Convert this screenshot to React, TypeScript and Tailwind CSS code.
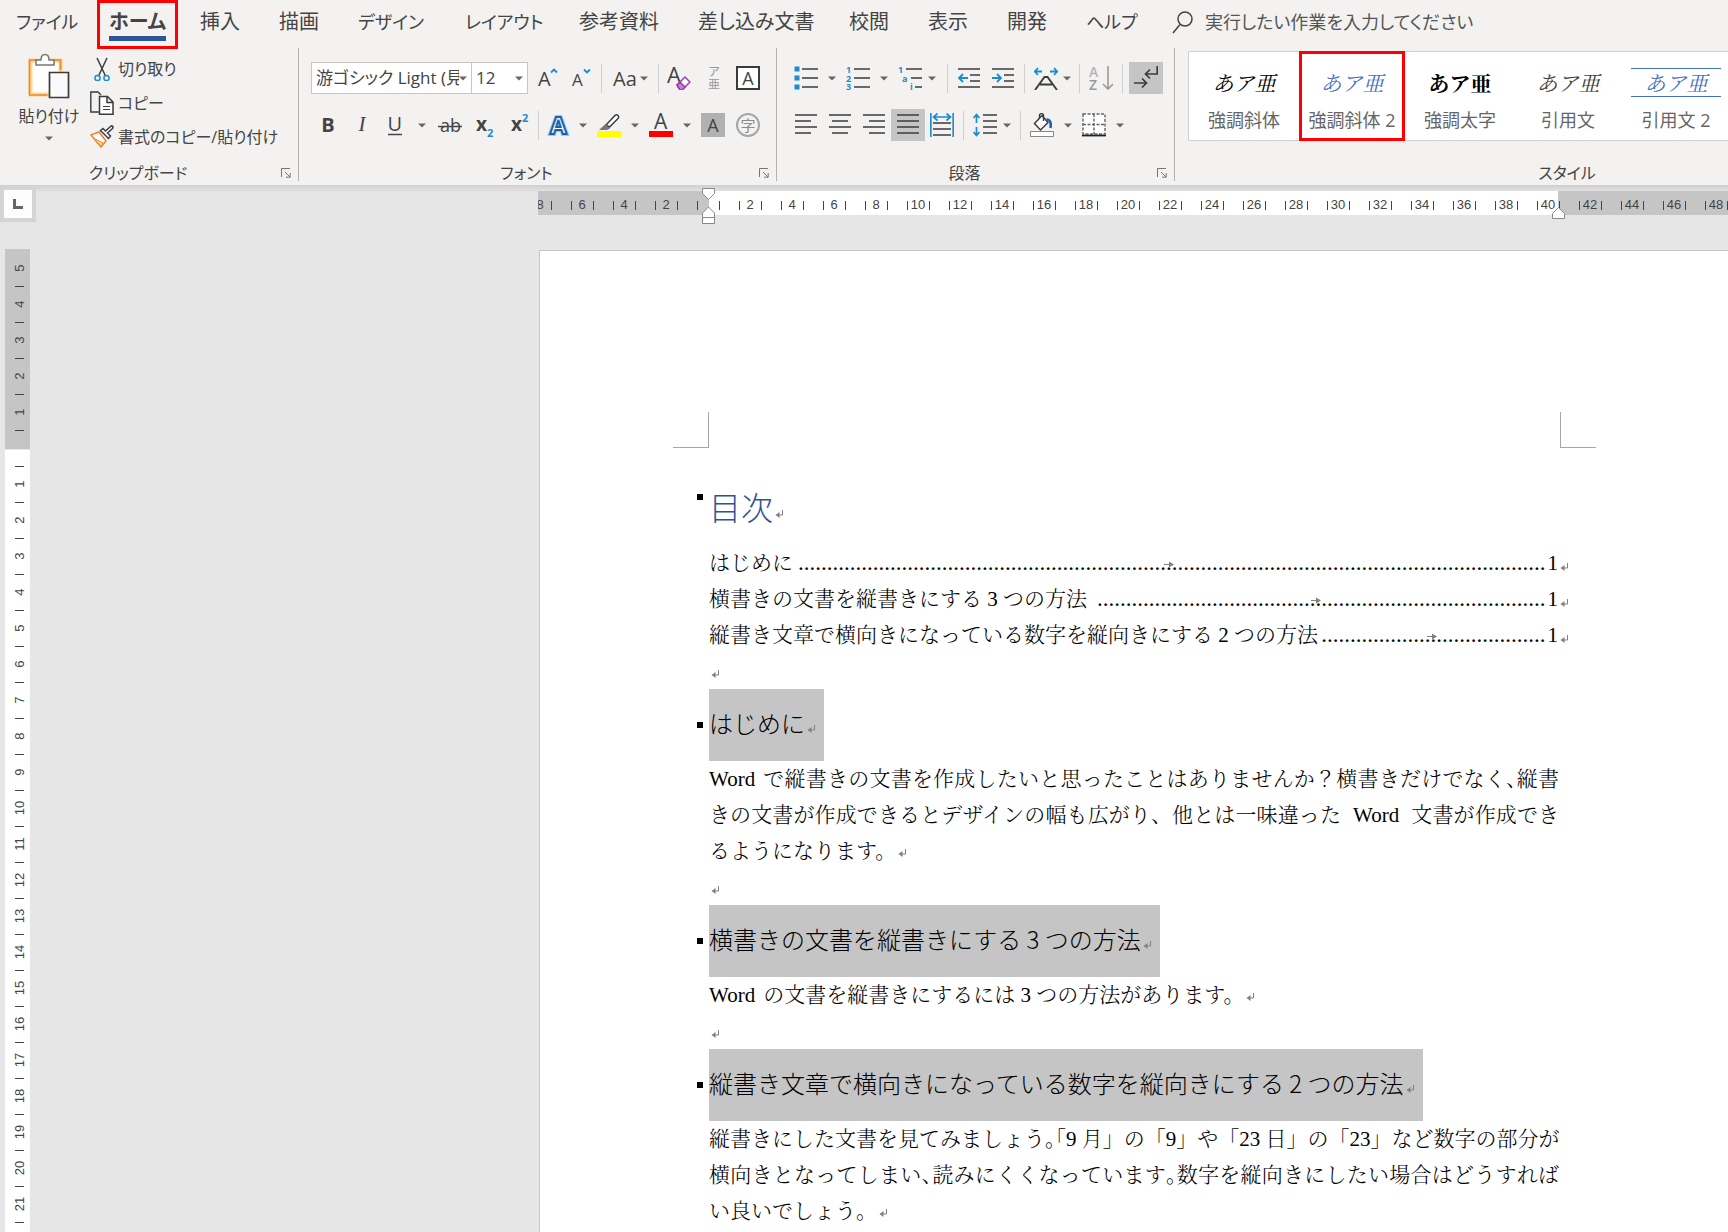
import React from 'react';
import { clsx } from 'clsx';

const INK = '#444444';
const BLUE = '#1e8bcd';

type IconProps = { w?: number; h?: number; children: React.ReactNode };

const Icon = ({ w = 24, h = 24, children }: IconProps) => (
  <svg width={w} height={h} viewBox={`0 0 ${w} ${h}`} fill="none" className="shrink-0" aria-hidden="true">
    {children}
  </svg>
);

const Caret = () => (
  <svg width="8" height="5" viewBox="0 0 8 5" className="shrink-0" aria-hidden="true">
    <path d="M0 0.5h8L4 4.5z" fill="#666" />
  </svg>
);

const Tool = ({ label, width = 'w-[34px]', active, children }: { label: string; width?: string; active?: boolean; children: React.ReactNode }) => (
  <button
    type="button"
    aria-label={label}
    className={clsx('flex h-8 shrink-0 items-center justify-center', width, active && 'bg-[#c5c5c5]')}
  >
    {children}
  </button>
);

const Drop = ({ label, width = 'w-[18px]' }: { label: string; width?: string }) => (
  <Tool label={label} width={width}><Caret /></Tool>
);

const Sep = ({ className = 'mx-1' }: { className?: string }) => (
  <span className={clsx('h-[29px] w-px shrink-0 bg-[#cfcfcf]', className)} />
);

const Lines = ({ rows, color = '#3b3b3b' }: { rows: number[][]; color?: string }) => (
  <path d={rows.map(([x, y, len]) => `M${x} ${y}h${len}`).join('')} stroke={color} strokeWidth="1.6" />
);

const Group = ({ title, width, launcher = true, children }: { title: string; width: string; launcher?: boolean; children: React.ReactNode }) => (
  <section className={clsx('flex shrink-0 flex-col justify-between', width, launcher && 'border-r border-[#b3b0ad]')}>
    {children}
    <div className="flex h-4 items-center">
      <h2 className="flex-1 text-center text-[16px] leading-4">{title}</h2>
      {launcher && (
        <button type="button" aria-label={`${title}の設定`} className="mr-0.5 flex w-5 justify-center">
          <Icon w={10} h={10}>
            <path d="M0.5 9V0.5H9M4 4l5 5M9.2 5v4.2H5" stroke="#777" />
          </Icon>
        </button>
      )}
    </div>
  </section>
);

const tabs = [
  { label: 'ファイル', width: 'w-[93px]', kana: true },
  { label: 'ホーム', width: 'w-[91px]', current: true },
  { label: '挿入', width: 'w-[79px]' },
  { label: '描画', width: 'w-[79px]' },
  { label: 'デザイン', width: 'w-[107px]', kana: true },
  { label: 'レイアウト', width: 'w-[114px]', kana: true },
  { label: '参考資料', width: 'w-[119px]' },
  { label: '差し込み文書', width: 'w-[151px]' },
  { label: '校閲', width: 'w-[79px]' },
  { label: '表示', width: 'w-[79px]' },
  { label: '開発', width: 'w-[79px]' },
  { label: 'ヘルプ', width: 'w-[86px]', kana: true },
];

const TabBar = () => (
  <nav className="flex h-12 items-start pl-4 leading-[44px]">
    {tabs.map((t) => (
      <div key={t.label} className={clsx('shrink-0', t.width, t.kana ? 'text-[18px]' : 'text-[20px]')}>
        <button type="button" className="relative whitespace-nowrap">
          <span className={clsx(t.current && 'font-bold')}>{t.label}</span>
          {t.current && (
            <>
              <span className="absolute inset-x-0 top-9 h-[5px] bg-[#2b579a]" />
              <span className="absolute -inset-x-3 top-0 h-[49px] border-3 border-[#ff0000]" />
            </>
          )}
        </button>
      </div>
    ))}
    <label className="flex flex-1 items-center gap-3 text-[18px]">
      <Icon w={21} h={44}>
        <circle cx="13" cy="19" r="7" stroke={INK} strokeWidth="1.5" />
        <path d="M8 24.5L1 33" stroke={INK} strokeWidth="1.5" />
      </Icon>
      <input
        className="h-11 flex-1 bg-transparent outline-none placeholder:text-[#555]"
        aria-label="操作アシスト"
        placeholder="実行したい作業を入力してください"
      />
    </label>
  </nav>
);

const Clipboard = () => (
  <Group title="クリップボード" width="w-[299px]">
    <div className="flex pt-1">
      <button type="button" className="flex w-[90px] flex-col items-center pl-2 text-[16px]">
        <Icon w={42} h={48}>
          <path d="M2.5 8.500h30v34h-30z" fill="#fff" stroke="#fbd98f" strokeWidth="4" />
          <path d="M10 8H1.500v35h18M26 8h6.500v10" stroke="#ee8434" strokeWidth="1.600" />
          <path d="M8 13V8h5c0-3 1-5.500 4-5.500s4 2.500 4 5.500h5v5z" fill="#fff" stroke="#777" strokeWidth="1.500" />
          <path d="M21.500 20.500h19v25h-19z" fill="#fafafa" stroke="#3b3b3b" strokeWidth="1.700" />
        </Icon>
        <span className="mt-1 leading-6">貼り付け</span>
        <span className="mt-1 flex h-3 items-center"><Caret /></span>
      </button>
      <div className="flex flex-col text-[16px] leading-[34px]">
        <button type="button" className="flex items-center gap-1 whitespace-nowrap">
          <Icon>
            <path d="M7 1l8.500 18M17 1L8.500 19" stroke="#3b3b3b" strokeWidth="1.500" />
            <circle cx="7.500" cy="21" r="2.600" stroke={BLUE} strokeWidth="1.500" />
            <circle cx="16.500" cy="21" r="2.600" stroke={BLUE} strokeWidth="1.500" />
          </Icon>
          切り取り
        </button>
        <button type="button" className="flex items-center gap-1 whitespace-nowrap">
          <Icon>
            <path d="M9 21H0.800V1H8l3 3" stroke="#3b3b3b" strokeWidth="1.400" />
            <path d="M9.500 5.500h8l5.500 5.500v12.300H9.500zM17 6v5.500h6" fill="#fff" stroke="#3b3b3b" strokeWidth="1.500" />
            <path d="M13 15.500h7M13 18.500h7" stroke="#3b3b3b" strokeWidth="1.200" />
          </Icon>
          コピー
        </button>
        <button type="button" className="flex items-center gap-1 whitespace-nowrap">
          <Icon>
            <path d="M9 7L1 10l10 12 5-6z" fill="#fff" stroke="#ee8434" strokeWidth="1.500" />
            <path d="M3.500 13l9.500 5-2 3.500z" fill="#fbd98f" stroke="#ee8434" />
            <path d="M10.500 5.500l8 8 2-2.500-3-3 5-4.500c1.500-1.500-0.500-3.500-2-2l-5 4.500-2.500-2.500z" fill="#fff" stroke="#3b3b3b" strokeWidth="1.500" />
          </Icon>
          書式のコピー/貼り付け
        </button>
      </div>
    </div>
  </Group>
);

const Combo = ({ label, value, width }: { label: string; value: string; width: string }) => (
  <span className={clsx('flex h-8 items-center border border-[#c6c6c6] bg-white pr-1 pl-1', width)}>
    <select aria-label={label} className="min-w-0 flex-1 appearance-none overflow-hidden bg-white text-[17px] leading-7 outline-none">
      <option>{value}</option>
    </select>
    <Caret />
  </span>
);

const FontGroup = () => (
  <Group title="フォント" width="w-[478px]">
    <div className="flex flex-col gap-[15px] pt-3.5 pl-3">
      <div className="flex items-center">
        <Combo label="フォント名" value="游ゴシック Light (見出しのフォント)" width="w-[161px]" />
        <Combo label="フォント サイズ" value="12" width="w-[57px] -ml-px mr-[3px]" />
        <Tool label="フォントの拡大">
          <Icon>
            <text x="2" y="20" fontSize="20" fill={INK}>A</text>
            <path d="M15 6.500l3-3 3 3" stroke={BLUE} strokeWidth="1.800" />
          </Icon>
        </Tool>
        <Tool label="フォントの縮小">
          <Icon>
            <text x="2" y="20" fontSize="17" fill={INK}>A</text>
            <path d="M14 3.500l3 3 3-3" stroke={BLUE} strokeWidth="1.800" />
          </Icon>
        </Tool>
        <Sep className="mx-0.5" />
        <Tool label="文字種の変換" width="w-[52px]">
          <Icon w={28}><text x="1" y="20" fontSize="20" fill={INK}>Aa</text></Icon>
          <Caret />
        </Tool>
        <Sep className="mx-0.5" />
        <Tool label="書式のクリア" width="w-9">
          <Icon>
            <text x="0" y="17" fontSize="22" fill={INK}>A</text>
            <path d="M10 19l8-8 5 5-8 8h-2z" fill="#fff" stroke="#9b3fa8" strokeWidth="1.500" />
            <path d="M10 19l3-3 5 5-3 3h-2z" fill="#c77fd0" stroke="#9b3fa8" strokeWidth="1.500" />
          </Icon>
        </Tool>
        <Tool label="ルビ">
          <span className="flex flex-col items-center text-[12px] leading-[13px] text-[#999]"><span>ア</span><span>亜</span></span>
        </Tool>
        <Tool label="囲み線">
          <span className="flex size-6 items-center justify-center border-2 border-[#3b3b3b] bg-white text-[18px] leading-5">A</span>
        </Tool>
      </div>
      <div className="flex items-center">
        <Tool label="太字"><span className="text-[20px] font-bold">B</span></Tool>
        <Tool label="斜体"><span className="font-['Liberation_Serif',serif] text-[21px] italic">I</span></Tool>
        <Tool label="下線" width="w-8">
          <Icon><text x="4.500" y="18" fontSize="20" fill={INK}>U</text><path d="M5 21.500h14" stroke={INK} strokeWidth="1.500" /></Icon>
        </Tool>
        <Drop label="下線の種類" width="w-[21px]" />
        <Tool label="取り消し線" width="w-9">
          <Icon><text x="2" y="19" fontSize="18" fill={INK}>ab</text><path d="M0 13.500h24" stroke={INK} strokeWidth="1.500" /></Icon>
        </Tool>
        <Tool label="下付き" width="w-9">
          <Icon><text x="2" y="18" fontSize="19" fontWeight="700" fill={INK}>x</text><text x="13" y="24" fontSize="11" fontWeight="700" fill={BLUE}>2</text></Icon>
        </Tool>
        <Tool label="上付き">
          <Icon><text x="2" y="18" fontSize="19" fontWeight="700" fill={INK}>x</text><text x="13" y="9" fontSize="11" fontWeight="700" fill={BLUE}>2</text></Icon>
        </Tool>
        <Sep className="mr-0.5" />
        <Tool label="文字の効果">
          <Icon>
            <text x="4" y="21" fontSize="24" fontWeight="700" fill="#9cc9ee" stroke="#9cc9ee" strokeWidth="4">A</text>
            <text x="4" y="21" fontSize="24" fontWeight="700" fill="#fff" stroke="#1763ae" strokeWidth="2">A</text>
          </Icon>
        </Tool>
        <Drop label="文字の効果の種類" width="w-4" />
        <Tool label="蛍光ペンの色" width="w-9">
          <Icon>
            <path d="M9 12L18 2.500c2-2 5 1 3 3L12.500 14z" fill="#fff" stroke="#3b3b3b" strokeWidth="1.500" />
            <path d="M8.500 11l4.500 4.500-3 1.500H2z" fill="#777" />
            <path d="M0 18h24v6H0z" fill="#ffff00" />
          </Icon>
        </Tool>
        <Drop label="蛍光ペンの色の選択" width="w-4" />
        <Tool label="フォントの色" width="w-9">
          <Icon><text x="5" y="16" fontSize="21" fill={INK}>A</text><path d="M0 18h24v6H0z" fill="#ff0000" /></Icon>
        </Tool>
        <Drop label="フォントの色の選択" width="w-4" />
        <Tool label="文字の網かけ" width="w-9">
          <span className="flex size-6 items-center justify-center bg-[#b1b1b1] text-[18px]">A</span>
        </Tool>
        <Tool label="囲い文字">
          <span className="flex size-6 items-center justify-center rounded-full border-2 border-[#a6a6a6] text-[15px] text-[#8a8a8a]">字</span>
        </Tool>
      </div>
    </div>
  </Group>
);

const ParagraphGroup = () => (
  <Group title="段落" width="w-[398px]">
    <div className="flex flex-col gap-[15px] pt-3.5 pl-3">
      <div className="flex items-center">
        <Tool label="箇条書き">
          <Icon>
            <path d="M0.500 0.500h5v5h-5zM0.500 9.500h5v5h-5zM0.500 18.500h5v5h-5z" fill={BLUE} />
            <Lines rows={[[8, 3, 16], [8, 12, 16], [8, 21, 16]]} />
          </Icon>
        </Tool>
        <Drop label="行頭文字" />
        <Tool label="段落番号">
          <Icon>
            <g fontSize="9" fontWeight="700" fill={BLUE}><text x="0" y="6.500">1</text><text x="0" y="15.500">2</text><text x="0" y="24">3</text></g>
            <Lines rows={[[8, 3, 16], [8, 12, 16], [8, 21, 16]]} />
          </Icon>
        </Tool>
        <Drop label="番号ライブラリ" />
        <Tool label="アウトライン">
          <Icon>
            <g fontSize="9" fontWeight="700" fill={BLUE}><text x="0" y="6.500">1</text><text x="4" y="15.500">a</text><text x="12" y="24">i</text></g>
            <Lines rows={[[8, 3, 16], [13, 12, 11], [17, 21, 7]]} />
          </Icon>
        </Tool>
        <Drop label="リスト ライブラリ" width="w-2.5" />
        <Sep className="mr-1 ml-2.5" />
        <Tool label="インデントを減らす">
          <Icon>
            <Lines rows={[[1, 3, 22], [13, 9, 10], [13, 15, 10], [1, 21, 22]]} />
            <path d="M11 12H2M6 8l-4 4 4 4" stroke={BLUE} strokeWidth="1.800" />
          </Icon>
        </Tool>
        <Tool label="インデントを増やす">
          <Icon>
            <Lines rows={[[1, 3, 22], [13, 9, 10], [13, 15, 10], [1, 21, 22]]} />
            <path d="M1 12h9M6 8l4 4-4 4" stroke={BLUE} strokeWidth="1.800" />
          </Icon>
        </Tool>
        <Sep />
        <Tool label="拡張書式">
          <Icon>
            <path d="M1 24L10.500 11h3L23 24M6 18.500h12" stroke="#3b3b3b" strokeWidth="1.900" />
            <path d="M8 5.500H1M4 2L0.800 5.500 4 9M16 5.500h7M20 2l3.200 3.500L20 9" stroke={BLUE} strokeWidth="1.800" />
          </Icon>
        </Tool>
        <Drop label="拡張書式の種類" width="w-2" />
        <Sep className="mr-1 ml-2" />
        <Tool label="並べ替え">
          <Icon>
            <g fontSize="14" fontWeight="600"><text x="0" y="11" fill="#b5b5b5">A</text><text x="0" y="24" fill="#999">Z</text></g>
            <path d="M19 0v23M14 18l5 5 5-5" stroke="#999" strokeWidth="1.600" />
          </Icon>
        </Tool>
        <Sep className="mr-1.5 ml-1" />
        <Tool label="編集記号の表示/非表示" active>
          <Icon>
            <path d="M23.200 0v8H12M16 3.500L11.500 8 16 12.500M0 17h12M8 12.500l4.500 4.500L8 21.500" stroke="#3b3b3b" strokeWidth="1.700" />
          </Icon>
        </Tool>
      </div>
      <div className="flex items-center">
        <Tool label="左揃え"><Icon><Lines rows={[[1, 2, 22], [1, 8, 16], [1, 14, 22], [1, 20, 16]]} /></Icon></Tool>
        <Tool label="中央揃え"><Icon><Lines rows={[[1, 2, 22], [4, 8, 16], [1, 14, 22], [4, 20, 16]]} /></Icon></Tool>
        <Tool label="右揃え"><Icon><Lines rows={[[1, 2, 22], [7, 8, 16], [1, 14, 22], [7, 20, 16]]} /></Icon></Tool>
        <Tool label="両端揃え" active><Icon><Lines rows={[[1, 2, 22], [1, 8, 22], [1, 14, 22], [1, 20, 22]]} /></Icon></Tool>
        <Tool label="均等割り付け">
          <Icon>
            <path d="M0.800 0v24M23.200 0v24M4 4h16M7.500 0.500L3.500 4l4 3.500M16.500 0.500l4 3.500-4 3.500" stroke={BLUE} strokeWidth="1.700" />
            <Lines rows={[[3, 10, 18], [3, 16, 18], [3, 22, 18]]} />
          </Icon>
        </Tool>
        <Sep />
        <Tool label="行と段落の間隔">
          <Icon>
            <path d="M3.500 2v8M0.500 5l3-3.500 3 3.500M3.500 14v8M0.500 19l3 3.500 3-3.500" stroke={BLUE} strokeWidth="1.700" />
            <Lines rows={[[10, 2, 14], [10, 8, 14], [10, 14, 14], [10, 20, 14]]} />
          </Icon>
        </Tool>
        <Drop label="行間のオプション" width="w-2.5" />
        <Sep className="mr-1 ml-2" />
        <Tool label="塗りつぶし">
          <Icon>
            <path d="M12 2.500L4.500 10.500l6 6.500 7.500-7.500z" fill="#fff" stroke="#3b3b3b" strokeWidth="1.500" />
            <path d="M9.500 5V2.500c0-2.500 4-2.500 4 0V8" stroke="#3b3b3b" strokeWidth="1.400" />
            <path d="M16.500 6.500c3.500-0.500 5 3 4 8.500" stroke="#1763ae" strokeWidth="2.600" />
            <path d="M0.500 18.500h23v5h-23z" fill="#fff" stroke="#888" />
          </Icon>
        </Tool>
        <Drop label="塗りつぶしの色" />
        <Tool label="罫線">
          <Icon>
            <path d="M1 1h22v20H1zM12 1v20M1 11.500h22" fill="#fff" stroke="#666" strokeWidth="1.400" strokeDasharray="3 1.500" />
            <path d="M0 22.500h24" stroke="#222" strokeWidth="1.800" />
          </Icon>
        </Tool>
        <Drop label="罫線の種類" />
      </div>
    </div>
  </Group>
);

const styleItems = [
  { label: '強調斜体', sample: 'italic text-black' },
  { label: '強調斜体 2', sample: 'italic text-[#4472c4]', marked: true },
  { label: '強調太字', sample: 'font-bold text-black' },
  { label: '引用文', sample: 'italic text-[#404040]' },
  { label: '引用文 2', sample: 'italic text-[#4472c4] border-y border-[#4472c4]' },
];

// the gallery runs on past the right edge of the window
const StylesGroup = () => (
  <Group title="スタイル" width="w-[784px]" launcher={false}>
    <div className="mt-[3px] ml-[13px] flex h-[90px] border border-r-0 border-[#d0d0d0] bg-white">
      {styleItems.map((s) => (
        <button
          key={s.label}
          type="button"
          className={clsx(
            '-my-px ml-0.5 flex w-[106px] shrink-0 flex-col items-center border-3 pt-3.5 whitespace-nowrap',
            s.marked ? 'border-[#ff0000]' : 'border-transparent',
          )}
        >
          <span
            className={clsx(
              "flex h-[29px] w-[90px] items-center justify-center font-['Noto_Serif_CJK_JP','Noto_Sans_CJK_JP',serif] text-[21px] [font-feature-settings:normal]",
              s.sample,
            )}
          >
            あア亜
          </span>
          <span className="mt-[11px] text-[18px] leading-6 text-[#666]">{s.label}</span>
        </button>
      ))}
    </div>
  </Group>
);

const hMarks = ['8', '6', '4', '2', '', ...Array.from({ length: 25 }, (_, i) => String((i + 1) * 2))];

const HorizontalRuler = () => (
  <div className="relative mt-1.5 grid h-6 min-w-0 flex-1">
    <div className="col-start-1 row-start-1 flex">
      <span className="w-[171px] bg-[#c5c5c5]" />
      <span className="w-[849px] bg-white" />
      <span className="flex-1 bg-[#c5c5c5]" />
    </div>
    <div className="col-start-1 row-start-1 flex min-w-0 items-center overflow-hidden pt-1 font-['Liberation_Sans',sans-serif] text-[13px] text-[#444]">
      {hMarks.map((m, i) => (
        <span key={i} className={clsx('flex w-[42px] shrink-0 items-center justify-center gap-px', i === 0 && '-ml-[19px]')}>
          <span className="h-[9px] w-px bg-[#444]" />
          <span className="w-[19px] text-center leading-4">{m}</span>
          <span className="h-[9px] w-px bg-[#444]" />
        </span>
      ))}
    </div>
    <svg width="14" height="37" viewBox="0 0 14 37" className="absolute -top-[3px] left-[164px]" aria-hidden="true">
      <path d="M0.500 0.500h12v5l-6 6-6-6zM6.500 19l6 6v10.500H0.500V25zM0.500 29.500h12" fill="#fff" stroke="#888" />
    </svg>
    <svg width="14" height="12" viewBox="0 0 14 12" className="absolute top-4 left-[1014px]" aria-hidden="true">
      <path d="M6.500 0.500l6 6v5H0.500v-5z" fill="#fff" stroke="#888" />
    </svg>
  </div>
);

const VMark = ({ n }: { n: number }) => <span className="flex h-[18px] -rotate-90 items-center justify-center">{n}</span>;
const VTick = () => <span className="flex h-[18px] items-center justify-center"><span className="h-px w-[9px] bg-[#444]" /></span>;

const VerticalRuler = () => (
  <div className="ml-[5px] w-[25px] shrink-0 font-['Liberation_Sans',sans-serif] text-[13px] text-[#444]">
    <div className="bg-[#c5c5c5] py-2.5 pl-1">
      {[5, 4, 3, 2, 1].map((n) => <React.Fragment key={n}><VMark n={n} /><VTick /></React.Fragment>)}
    </div>
    <div className="mt-px bg-white pt-[7px] pl-1">
      {Array.from({ length: 24 }, (_, i) => <React.Fragment key={i}><VTick /><VMark n={i + 1} /></React.Fragment>)}
    </div>
  </div>
);

const Ret = () => (
  <svg width="9" height="9" viewBox="0 0 9 9" fill="none" className="ml-0.5 inline-block shrink-0" aria-hidden="true">
    <path d="M7.500 0v5H2" stroke="#808080" />
    <path d="M4.500 2v6L0.500 5z" fill="#808080" />
  </svg>
);

// half-width setting for punctuation, as Japanese line composition does
const Half = ({ children }: { children: string }) => <span className="[font-feature-settings:'halt']">{children}</span>;

const Full = ({ children }: { children: React.ReactNode }) => (
  <span className="block whitespace-nowrap [text-align-last:justify]">{children}</span>
);

const Blank = () => <p className="flex h-9 items-center pt-1.5"><Ret /></p>;

const TocRow = ({ title, dots }: { title: string; dots: number }) => (
  <li className="-mr-5 flex h-9 items-center">
    <a href="#top" className="flex flex-1 items-center whitespace-nowrap">
      <span>{title}</span>
      <span className="relative flex h-9 flex-1 items-center justify-end text-[23px]">
        {'.'.repeat(dots)}
        <svg width="10" height="7" viewBox="0 0 10 7" className="absolute top-4 left-1/2 -translate-x-1/2" aria-hidden="true">
          <path d="M0 3h5V0.500L10 3.500 5 6.500V4H0z" fill="#808080" />
        </svg>
      </span>
      <span className="ml-0.5">1</span>
    </a>
    <span className="flex w-[21px] pt-2"><Ret /></span>
  </li>
);

const Bullet = ({ className }: { className: string }) => <span className={clsx('absolute -left-3 size-1.5 bg-black', className)} />;

const Heading = ({ children }: { children: string }) => (
  <h3 className="relative flex h-[72px] w-fit items-center bg-[#c5c5c5] pr-2 pb-1 font-['Noto_Sans_CJK_JP',sans-serif] text-[24px] font-extralight whitespace-nowrap text-black">
    <Bullet className="top-[33px]" />
    {children}
    <span className="flex pt-3"><Ret /></span>
  </h3>
);

const Page = () => (
  <article className="min-w-0 flex-1 border-t border-l border-[#c5c5c5] bg-white pt-[161px] font-['Liberation_Serif','Noto_Serif_CJK_JP','Noto_Sans_CJK_JP',serif] text-[21px] leading-9 font-light text-black">
    <div className="ml-[133px] flex gap-[851px]">
      <span className="h-9 w-9 shrink-0 border-r border-b border-[#a6a6a6]" />
      <span className="h-9 w-9 shrink-0 border-b border-l border-[#a6a6a6]" />
    </div>
    <div className="ml-[169px] w-[850px] pt-[25px]">
      <h1 className="relative flex h-[72px] items-center pb-1.5 font-['Noto_Sans_CJK_JP',sans-serif] text-[32px] font-extralight text-[#2f5496]">
        <Bullet className="top-[21px]" />
        目次
        <span className="flex pt-4"><Ret /></span>
      </h1>
      <ul>
        <TocRow title="はじめに" dots={130} />
        <TocRow title="横書きの文書を縦書きにする 3 つの方法" dots={78} />
        <TocRow title="縦書き文章で横向きになっている数字を縦向きにする 2 つの方法" dots={39} />
      </ul>
      <Blank />
      <Heading>はじめに</Heading>
      <p>
        <Full><span className="mr-2">Word</span>で縦書きの文書を作成したいと思ったことはありませんか？横書きだけでなく<Half>、</Half>縦書</Full>
        <Full>きの文書が作成できるとデザインの幅も広がり、他とは一味違った<span className="mx-3">Word</span>文書が作成でき</Full>
        るようになります。<Ret />
      </p>
      <Blank />
      <Heading>横書きの文書を縦書きにする 3 つの方法</Heading>
      <p><span className="mr-2">Word</span>の文書を縦書きにするには 3 つの方法があります。<Ret /></p>
      <Blank />
      <Heading>縦書き文章で横向きになっている数字を縦向きにする 2 つの方法</Heading>
      <p>
        <Full>縦書きにした文書を見てみましょう<Half>。</Half><Half>「</Half>9 月」の「9」や「23 日」の「23」など数字の部分が</Full>
        <Full>横向きとなってしまい<Half>、</Half>読みにくくなっています<Half>。</Half>数字を縦向きにしたい場合はどうすれば</Full>
        い良いでしょう。<Ret />
      </p>
    </div>
  </article>
);

export default function App() {
  return (
    <div className="flex h-screen flex-col overflow-hidden bg-[#e6e6e6] font-['Open_Sans','Noto_Sans_CJK_JP',sans-serif] text-[#444]">
      <header className="shrink-0 bg-[#f3f2f1] pb-1 [font-feature-settings:'palt']">
        <TabBar />
        <div className="flex h-[133px]">
          <Clipboard />
          <FontGroup />
          <ParagraphGroup />
          <StylesGroup />
        </div>
      </header>
      <div className="flex h-16 shrink-0 items-start bg-linear-to-b from-[#cfcfcf] from-0% to-[#e6e6e6] to-[12%]">
        <button type="button" aria-label="タブの種類" className="mt-px mr-[502px] flex size-9 shrink-0 items-center justify-center border-4 border-[#d4d4d4] bg-[#fdfdfd]">
          <Icon w={10} h={10}><path d="M1.500 0v8.500H10" stroke="#666" strokeWidth="3" /></Icon>
        </button>
        <HorizontalRuler />
      </div>
      <main className="flex min-h-0 flex-1 items-stretch overflow-hidden">
        <VerticalRuler />
        <div className="flex min-w-0 flex-1 pt-px pl-[509px]">
          <Page />
        </div>
      </main>
    </div>
  );
}
